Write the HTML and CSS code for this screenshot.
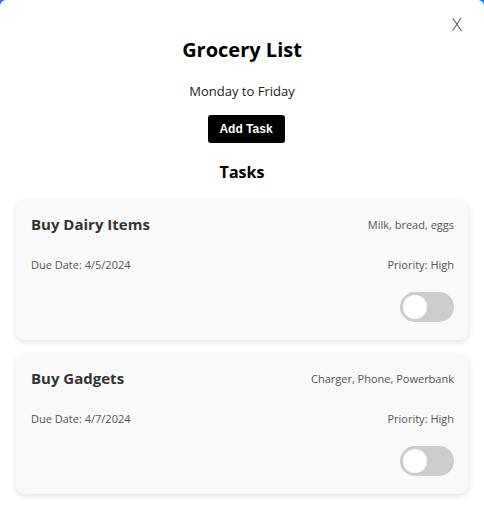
FILE: index.html
```html
<!DOCTYPE html>
<html>
<head>
<meta charset="utf-8">
<link rel="stylesheet" href="styles.css">
</head>
<body>
<div class="modal">
  <button class="close">X</button>
  <h1 class="title">Grocery List</h1>
  <p class="subtitle">Monday to Friday</p>
  <button class="add">Add Task</button>
  <h2 class="tasks-heading">Tasks</h2>
  <div class="list">
    <div class="card">
      <div class="row top">
        <span class="name">Buy Dairy Items</span>
        <span class="desc">Milk, bread, eggs</span>
      </div>
      <div class="row meta">
        <span>Due Date: 4/5/2024</span>
        <span>Priority: High</span>
      </div>
      <div class="row end"><span class="toggle"><span class="knob"></span></span></div>
    </div>
    <div class="card">
      <div class="row top">
        <span class="name">Buy Gadgets</span>
        <span class="desc">Charger, Phone, Powerbank</span>
      </div>
      <div class="row meta">
        <span>Due Date: 4/7/2024</span>
        <span>Priority: High</span>
      </div>
      <div class="row end"><span class="toggle"><span class="knob"></span></span></div>
    </div>
  </div>
</div>
</body>
</html>
```
FILE: styles.css
```css
html, body { margin: 0; padding: 0; }
body {
  background: #1a73e8;
  font-family: "Open Sans", "Noto Sans", sans-serif;
  height: 525px;
  overflow: hidden;
}
.modal {
  position: relative;
  background: #fff;
  border-radius: 6px;
  height: 540px;
  box-sizing: border-box;
  padding: 37px 16px 0;
  display: flex;
  flex-direction: column;
  align-items: center;
}
.close {
  position: absolute;
  top: 12px;
  right: 22px;
  background: none;
  border: none;
  padding: 0;
  font-family: "Open Sans", sans-serif;
  font-weight: 300;
  font-size: 19px;
  color: #555;
  line-height: 24px;
}
.title {
  margin: 0;
  font-size: 20px;
  line-height: 26px;
  font-weight: 700;
  color: #000;
}
.subtitle {
  margin: 19px 0 0;
  font-size: 13px;
  line-height: 18px;
  color: #222;
}
.add {
  margin: 15px 0 0 8px;
  background: #000;
  color: #fff;
  border: none;
  border-radius: 3px;
  width: 77px;
  height: 28px;
  font-family: "Liberation Sans", Arial, sans-serif;
  font-weight: 700;
  font-size: 12px;
}
.tasks-heading {
  margin: 18px 0 0;
  font-size: 16px;
  line-height: 22px;
  font-weight: 700;
  color: #000;
}
.list {
  align-self: stretch;
  margin-top: 17px;
  display: flex;
  flex-direction: column;
  gap: 14px;
}
.card {
  background: #f9f9f9;
  border-radius: 8px;
  box-shadow: 0 2px 6px rgba(0,0,0,0.12);
  padding: 13px 14px 18px 15px;
  height: 140px;
  box-sizing: border-box;
  display: flex;
  flex-direction: column;
}
.row {
  display: flex;
  justify-content: space-between;
  align-items: center;
}
.name {
  font-size: 15px;
  font-weight: 700;
  color: #333;
  line-height: 22px;
}
.desc {
  font-size: 11px;
  color: #555;
}
.meta {
  margin-top: 22px;
  font-size: 11px;
  color: #555;
  line-height: 16px;
}
.end {
  margin-top: auto;
  justify-content: flex-end;
}
.toggle {
  width: 54px;
  height: 30px;
  border-radius: 15px;
  background: #ccc;
  display: flex;
  align-items: center;
  padding-left: 3px;
  box-sizing: border-box;
}
.knob {
  width: 24px;
  height: 24px;
  border-radius: 50%;
  background: #fff;
}
```
